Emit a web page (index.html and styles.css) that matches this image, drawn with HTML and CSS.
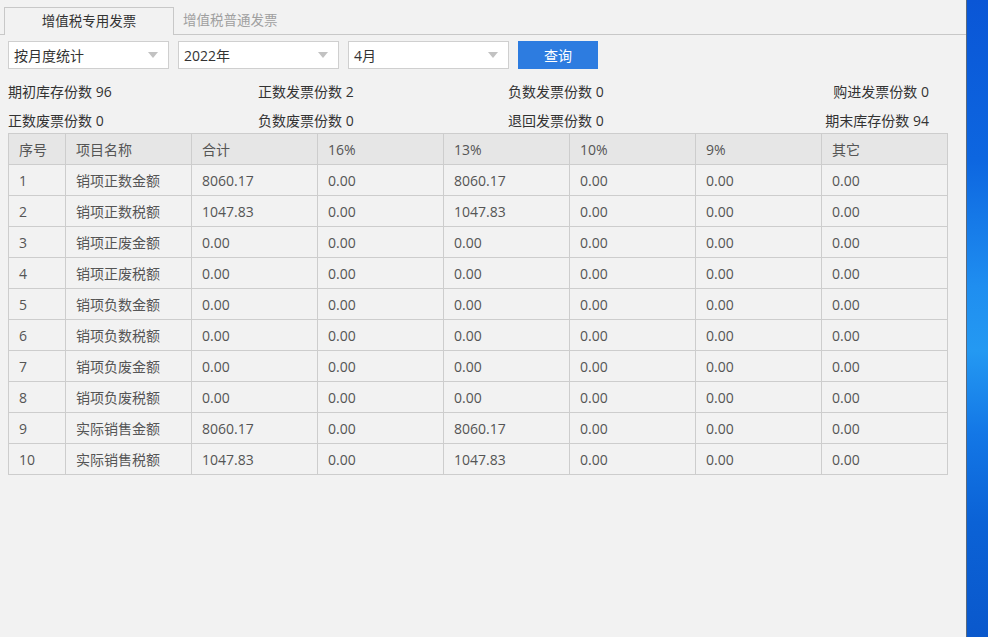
FILE: index.html
```html
<!DOCTYPE html>
<html lang="zh">
<head>
<meta charset="utf-8">
<title>发票统计</title>
<link rel="stylesheet" href="styles.css">
</head>
<body>
<div class="app">
  <div class="window">
    <div class="tabs">
      <div class="tab active">增值税专用发票</div>
      <div class="tab">增值税普通发票</div>
    </div>
    <div class="filters">
      <div class="select"><span>按月度统计</span><i class="arrow"></i></div>
      <div class="select"><span>2022年</span><i class="arrow"></i></div>
      <div class="select"><span>4月</span><i class="arrow"></i></div>
      <button class="btn">查询</button>
    </div>
    <div class="stats">
      <div>期初库存份数 96</div>
      <div>正数发票份数 2</div>
      <div>负数发票份数 0</div>
      <div class="right">购进发票份数 0</div>
      <div>正数废票份数 0</div>
      <div>负数废票份数 0</div>
      <div>退回发票份数 0</div>
      <div class="right">期末库存份数 94</div>
    </div>
    <table class="grid">
      <colgroup>
        <col class="c-no"><col class="c-w"><col class="c-w"><col class="c-w"><col class="c-w"><col class="c-w"><col class="c-w"><col class="c-w">
      </colgroup>
      <thead>
        <tr><th>序号</th><th>项目名称</th><th>合计</th><th>16%</th><th>13%</th><th>10%</th><th>9%</th><th>其它</th></tr>
      </thead>
      <tbody>
        <tr><td>1</td><td>销项正数金额</td><td>8060.17</td><td>0.00</td><td>8060.17</td><td>0.00</td><td>0.00</td><td>0.00</td></tr>
        <tr><td>2</td><td>销项正数税额</td><td>1047.83</td><td>0.00</td><td>1047.83</td><td>0.00</td><td>0.00</td><td>0.00</td></tr>
        <tr><td>3</td><td>销项正废金额</td><td>0.00</td><td>0.00</td><td>0.00</td><td>0.00</td><td>0.00</td><td>0.00</td></tr>
        <tr><td>4</td><td>销项正废税额</td><td>0.00</td><td>0.00</td><td>0.00</td><td>0.00</td><td>0.00</td><td>0.00</td></tr>
        <tr><td>5</td><td>销项负数金额</td><td>0.00</td><td>0.00</td><td>0.00</td><td>0.00</td><td>0.00</td><td>0.00</td></tr>
        <tr><td>6</td><td>销项负数税额</td><td>0.00</td><td>0.00</td><td>0.00</td><td>0.00</td><td>0.00</td><td>0.00</td></tr>
        <tr><td>7</td><td>销项负废金额</td><td>0.00</td><td>0.00</td><td>0.00</td><td>0.00</td><td>0.00</td><td>0.00</td></tr>
        <tr><td>8</td><td>销项负废税额</td><td>0.00</td><td>0.00</td><td>0.00</td><td>0.00</td><td>0.00</td><td>0.00</td></tr>
        <tr><td>9</td><td>实际销售金额</td><td>8060.17</td><td>0.00</td><td>8060.17</td><td>0.00</td><td>0.00</td><td>0.00</td></tr>
        <tr><td>10</td><td>实际销售税额</td><td>1047.83</td><td>0.00</td><td>1047.83</td><td>0.00</td><td>0.00</td><td>0.00</td></tr>
      </tbody>
    </table>
  </div>
  <div class="desktop"></div>
</div>
</body>
</html>
```
FILE: styles.css
```css
* { box-sizing: border-box; }
html, body { margin: 0; height: 100%; }
body {
  font-family: "Open Sans", "Noto Sans CJK SC", sans-serif;
  font-size: 14px;
  color: #333;
  background: #f2f2f2;
}
.app { display: flex; height: 637px; overflow: hidden; }
.window {
  width: 967px;
  flex: none;
  background: #f2f2f2;
  border-right: 1px solid #5a6b80;
}
.desktop {
  flex: 1;
  background: linear-gradient(180deg, #0a56d6 0%, #0d66e0 25%, #1f8ef0 45%, #2499f2 55%, #1377e6 68%, #0b62d6 82%, #0a58cc 100%);
}
.tabs {
  display: flex;
  padding: 7px 0 0 4px;
  height: 35px;
  border-bottom: 1px solid #c8c8c8;
}
.tab {
  width: 170px;
  height: 28px;
  line-height: 27px;
  padding-left: 9px;
  color: #a0a0a0;
  font-size: 13.5px;
}
.tab.active {
  text-align: center;
  padding-left: 0;
  color: #333;
  background: #f2f2f2;
  border: 1px solid #c8c8c8;
  border-bottom: none;
}
.filters {
  display: flex;
  gap: 9px;
  padding: 6px 0 0 8px;
  height: 34px;
}
.select {
  width: 161px;
  height: 28px;
  background: #fff;
  border: 1px solid #cfcfcf;
  display: flex;
  align-items: center;
  justify-content: space-between;
  padding: 0 10px 0 5px;
  color: #333;
}
.arrow {
  width: 0; height: 0;
  border-left: 5px solid transparent;
  border-right: 5px solid transparent;
  border-top: 6px solid #c2c2c2;
}
.btn {
  width: 80px;
  height: 28px;
  border: none;
  background: #2d7ce0;
  color: #fff;
  font-family: inherit;
  font-size: 14px;
  padding: 0;
}
.stats {
  display: grid;
  grid-template-columns: 250px 250px 250px 171px;
  grid-auto-rows: 29px;
  padding: 7px 0 0 8px;
  height: 64px;
  align-items: center;
  color: #333;
}
.stats .right { text-align: right; }
.grid {
  margin-left: 8px;
  border-collapse: collapse;
  table-layout: fixed;
  width: 940px;
  color: #555;
}
.c-no { width: 57px; }
.c-w { width: 126px; }
.grid th, .grid td {
  border: 1px solid #cdcdcd;
  height: 31px;
  padding: 0 0 0 10px;
  text-align: left;
  font-weight: normal;
}
.grid th { background: #e6e6e6; }
.grid td { background: #f2f2f2; }
```
